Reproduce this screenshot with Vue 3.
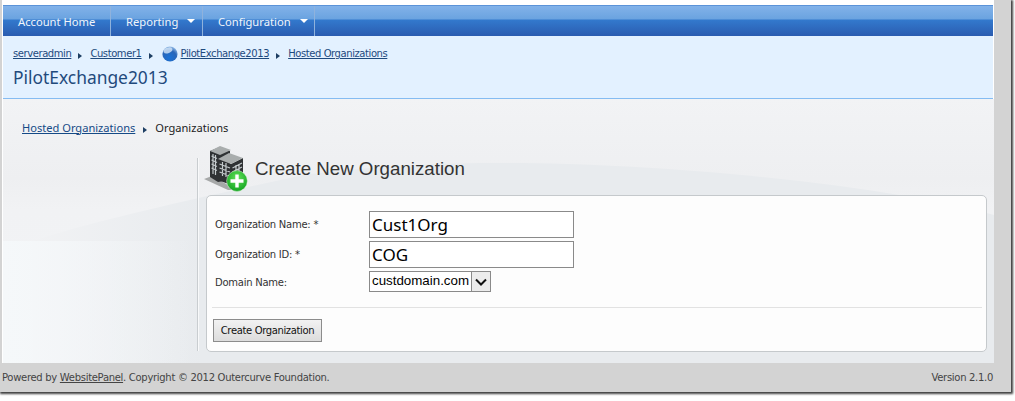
<script setup>
const navItems = [
  { label: 'Account Home', w: 108, caret: false },
  { label: 'Reporting', w: 92, caret: true },
  { label: 'Configuration', w: 112, caret: true },
]
</script>

<template>
  <div class="screen">
    <div class="window">
      <div class="page">
        <nav class="nav">
          <div v-for="n in navItems" :key="n.label" class="nav-item" :style="{ width: n.w + 'px' }">
            <span>{{ n.label }}</span>
            <i v-if="n.caret" class="caret"></i>
          </div>
        </nav>
        <header class="head">
          <div class="crumbs">
            <a>serveradmin</a><i class="sep"></i>
            <a>Customer1</a><i class="sep"></i>
            <svg class="globe" width="16" height="16" viewBox="0 0 16 16">
              <defs>
                <radialGradient id="gl" cx="0.45" cy="0.75" r="0.8">
                  <stop offset="0" stop-color="#1a72d6" />
                  <stop offset="0.6" stop-color="#2a66b8" />
                  <stop offset="1" stop-color="#a9cdf0" />
                </radialGradient>
              </defs>
              <circle cx="8" cy="8" r="7.6" fill="url(#gl)" />
              <ellipse cx="6" cy="4.4" rx="4.6" ry="2.8" fill="#d7e7f8" opacity="0.8" transform="rotate(-20 6 4.4)" />
            </svg>
            <a>PilotExchange2013</a><i class="sep"></i>
            <a>Hosted Organizations</a>
          </div>
          <h1 class="title">PilotExchange2013</h1>
        </header>
        <main class="content">
          <svg class="swoosh" width="991" height="264" viewBox="0 0 991 264">
            <defs>
              <linearGradient id="top" x1="0" y1="0" x2="0" y2="1">
                <stop offset="0" stop-color="#f2f3f5" />
                <stop offset="0.3" stop-color="#eeeff1" />
                <stop offset="0.42" stop-color="#f1f2f4" />
                <stop offset="1" stop-color="#f2f4f6" />
              </linearGradient>
              <linearGradient id="fade" gradientUnits="userSpaceOnUse" x1="30" y1="0" x2="200" y2="0">
                <stop offset="0" stop-color="#f1f2f4" />
                <stop offset="1" stop-color="#e8ebee" />
              </linearGradient>
              <linearGradient id="left" x1="0" y1="0" x2="1" y2="0">
                <stop offset="0" stop-color="#f5f8fa" />
                <stop offset="1" stop-color="#f5f8fa" stop-opacity="0" />
              </linearGradient>
            </defs>
            <rect width="991" height="264" fill="url(#top)" />
            <path d="M30 264 L30 142 C 90 122 190 100 300 76 C 380 66 440 64 500 64 C 620 64 780 76 902 97 C 940 104 970 110 991 116 L991 264 Z" fill="url(#fade)" />
            <rect y="142" width="190" height="122" fill="url(#left)" />
          </svg>
          <div class="sub-crumbs">
            <a>Hosted Organizations</a><i class="sep big"></i><span>Organizations</span>
          </div>
          <section class="form-col">
            <div class="form-title">
              <svg class="org-icon" width="46" height="46" viewBox="0 0 46 46">
                <defs>
                  <radialGradient id="gr" cx="0.5" cy="0.35" r="0.7">
                    <stop offset="0" stop-color="#62e05a" />
                    <stop offset="1" stop-color="#0da01c" />
                  </radialGradient>
                </defs>
                <path d="M1 33 L25 44 L34 44 L9 30Z" fill="#a6a8a8" />
                <path d="M7 5 L17 1 L27 5 L27 34 L15 36 L7 31Z" fill="#2f3234" />
                <path d="M7 5 L17 0 L28 4 L17 9Z" fill="#a9adad" />
                <path d="M8.5 10L14 12.5M8.5 14L14 16.5M8.5 18L14 20.5M8.5 22L14 24.5M10 8V28M12.5 9V29" stroke="#c4cacc" stroke-width="1.2" fill="none" />
                <path d="M15 13 L28 18 L40 12 L40 32 L28 39 L15 34Z" fill="#2f3234" />
                <path d="M15 13 L26 7 L40 12 L28 18Z" fill="#a9adad" />
                <path d="M16.5 18L27 22M16.5 22L27 26M16.5 26L27 30M19.5 16V30M23 17V31M29.5 22L39 17M29.5 26L39 21M33 19V32M36 18V31" stroke="#c4cacc" stroke-width="1.2" fill="none" />
                <circle cx="34" cy="35" r="10.4" fill="url(#gr)" stroke="#e4f3df" stroke-width="0.5" />
                <path d="M34 28.5V41.5M27.5 35H40.5" stroke="#fff" stroke-width="3.4" />
              </svg>
              <h2>Create New Organization</h2>
            </div>
            <div class="card">
              <div class="row r1">
                <label>Organization Name: *</label>
                <div class="input">Cust1Org</div>
              </div>
              <div class="row r2">
                <label>Organization ID: *</label>
                <div class="input">COG</div>
              </div>
              <div class="row r3">
                <label>Domain Name:</label>
                <div class="select">
                  <span>custdomain.com</span>
                  <b>
                    <svg width="12" height="8" viewBox="0 0 12 8"><path d="M1 1.5 L6 6.5 L11 1.5" fill="none" stroke="#111" stroke-width="2" /></svg>
                  </b>
                </div>
              </div>
              <hr />
              <button class="btn" type="button">Create Organization</button>
            </div>
          </section>
        </main>
      </div>
      <footer class="foot">
        <span>Powered by <u>WebsitePanel</u>. Copyright © 2012 Outercurve Foundation.</span>
        <span>Version 2.1.0</span>
      </footer>
    </div>
  </div>
</template>

<style>
html, body { margin: 0; background: #fff; }
</style>

<style scoped>
.screen {
  width: 1015px;
  height: 401px;
  overflow: hidden;
  background: #fff;
  font-family: "DejaVu Sans", sans-serif;
}
.window {
  width: 1011px;
  height: 392px;
  background: #d3d3d3;
  box-shadow: 1px 1px 2px 1px #3f3f3f;
  padding-left: 2px;
  box-sizing: border-box;
}
.page {
  width: 992px;
  height: 363px;
  background: #fff;
  padding: 5px 1px 0 1px;
  box-sizing: border-box;
  display: flex;
  flex-direction: column;
}
.nav {
  height: 31px;
  flex: none;
  display: flex;
  box-sizing: border-box;
  border-top: 1px solid #5b93d8;
  background: linear-gradient(#82b2e9 0, #6aa3e0 13px, #3379cd 14px, #2b5cb0 30px);
  width: 990px;
}
.nav-item {
  box-sizing: border-box;
  border-right: 1px solid #8fb2dc;
  color: #f0f5fb;
  font: 11.2px "Noto Sans", sans-serif;
  display: flex;
  align-items: center;
  padding: 0 0 0 15px;
  gap: 9px;
}
.caret {
  width: 0;
  height: 0;
  border-left: 4px solid transparent;
  border-right: 4px solid transparent;
  border-top: 4px solid #fff;
}
.head {
  height: 63px;
  flex: none;
  width: 990px;
  box-sizing: border-box;
  background: #e3f1ff;
  border-bottom: 1px solid #85bcf2;
  padding: 9px 0 0 10px;
}
.crumbs {
  display: flex;
  align-items: center;
  height: 17px;
  font: 10px "DejaVu Sans", sans-serif;
  letter-spacing: -0.42px;
  color: #1e4a7e;
}
.crumbs a { text-decoration: underline; }
.sep {
  width: 0;
  height: 0;
  border-top: 3.5px solid transparent;
  border-bottom: 3.5px solid transparent;
  border-left: 4px solid #1d3e63;
  margin: 5px 8px 0 7px;
}
.globe { margin-right: 3px; margin-left: 1px; }
.title {
  margin: 2px 0 0;
  font: 400 17.4px "Noto Sans", sans-serif;
  color: #1f4a7c;
  line-height: 26px;
}
.content {
  position: relative;
  flex: 1;
  width: 991px;
  background: #f1f2f4;
  overflow: hidden;
}
.swoosh { position: absolute; left: 0; top: 0; }
.sub-crumbs {
  position: relative;
  display: flex;
  align-items: center;
  height: 16px;
  margin: 20px 0 0 19px;
  font: 11.1px "Noto Sans", sans-serif;
  color: #222;
}
.sub-crumbs a { color: #154a86; text-decoration: underline; }
.sep.big { margin: 6px 8px 0 8px; }
.form-col {
  position: relative;
  margin: 11px 0 0 194px;
  padding-left: 9px;
  width: 781px;
}
.form-col::before {
  content: "";
  position: absolute;
  left: 0;
  top: 12px;
  bottom: 1px;
  width: 1px;
  background: #c9cdd0;
  box-shadow: 1px 0 0 #f8f9fa;
}
.form-title {
  display: flex;
  align-items: center;
  height: 49px;
  margin-left: -3px;
  gap: 6px;
}
.org-icon { flex: none; margin-top: -3px; }
.form-title h2 {
  margin: -4px 0 0;
  font: 400 18.7px "Liberation Sans", sans-serif;
  color: #333;
}
.card {
  box-sizing: border-box;
  width: 781px;
  height: 157px;
  background: #fdfdfd;
  border: 1px solid #c5c9cc;
  border-radius: 5px;
  padding: 15px 4px 0 5px;
}
.row {
  display: flex;
  align-items: center;
  font: 10px "DejaVu Sans", sans-serif;
  letter-spacing: -0.25px;
  color: #333;
}
.row label { width: 157px; padding-left: 3px; box-sizing: border-box; }
.r1, .r2 { height: 27px; margin-bottom: 3px; }
.r3 { height: 21px; margin-top: 1px; }
.r3 label { padding-top: 2px; }
.input {
  box-sizing: border-box;
  width: 205px;
  height: 27px;
  border: 1px solid #8a8a8a;
  background: #fff;
  font: 17px "Noto Sans", sans-serif;
  letter-spacing: 0;
  color: #000;
  padding-left: 2px;
  line-height: 26px;
}
.select {
  box-sizing: border-box;
  display: flex;
  height: 21px;
  width: 122px;
  border: 1px solid #8a8a8a;
  background: #fff;
  font: 13.33px "Liberation Sans", sans-serif;
  letter-spacing: 0;
  color: #000;
  line-height: 18px;
}
.select span { padding-left: 2px; width: 101px; box-sizing: border-box; white-space: nowrap; }
.select b {
  width: 19px;
  box-sizing: border-box;
  display: flex;
  align-items: center;
  justify-content: center;
  background: #ececec;
  border-left: 1px solid #8a8a8a;
}
hr {
  border: 0;
  border-top: 1px solid #e2e2e2;
  margin: 15px 0 11px;
}
.btn {
  display: block;
  box-sizing: border-box;
  width: 109px;
  height: 23px;
  margin-left: 1px;
  border: 1px solid #8c8c8c;
  background: linear-gradient(#f2f2f2, #dcdcdc);
  font: 10px "DejaVu Sans", sans-serif;
  letter-spacing: -0.36px;
  color: #111;
  padding: 0;
}
.foot {
  height: 29px;
  display: flex;
  align-items: center;
  justify-content: space-between;
  padding-right: 18px;
  font: 10px "DejaVu Sans", sans-serif;
  letter-spacing: -0.3px;
  color: #444;
}
</style>
